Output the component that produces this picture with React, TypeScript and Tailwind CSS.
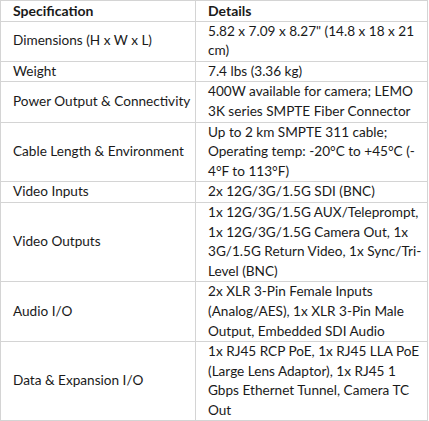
import React from "react";

const rows: [string, string[]][] = [
  ["Dimensions (H x W x L)", ["5.82 x 7.09 x 8.27\" (14.8 x 18 x 21", "cm)"]],
  ["Weight", ["7.4 lbs (3.36 kg)"]],
  ["Power Output & Connectivity", ["400W available for camera; LEMO", "3K series SMPTE Fiber Connector"]],
  ["Cable Length & Environment", ["Up to 2 km SMPTE 311 cable;", "Operating temp: -20°C to +45°C (-", "4°F to 113°F)"]],
  ["Video Inputs", ["2x 12G/3G/1.5G SDI (BNC)"]],
  ["Video Outputs", ["1x 12G/3G/1.5G AUX/Teleprompt,", "1x 12G/3G/1.5G Camera Out, 1x", "3G/1.5G Return Video, 1x Sync/Tri-", "Level (BNC)"]],
  ["Audio I/O", ["2x XLR 3-Pin Female Inputs", "(Analog/AES), 1x XLR 3-Pin Male", "Output, Embedded SDI Audio"]],
  ["Data & Expansion I/O", ["1x RJ45 RCP PoE, 1x RJ45 LLA PoE", "(Large Lens Adaptor), 1x RJ45 1", "Gbps Ethernet Tunnel, Camera TC", "Out"]],
];

export default function App() {
  return (
    <div className="w-[429px] h-[421px] bg-white" style={{ fontFamily: "Lato, 'Liberation Sans', sans-serif" }}>
      <table className="w-[428px] border-collapse table-fixed text-[13.6px] leading-[19.6px] text-[#1a1a1a]">
        <colgroup>
          <col className="w-[195px]" />
          <col />
        </colgroup>
        <thead>
          <tr>
            <th className="border border-[#d4d4d4] px-3 py-0 text-left font-bold text-[14px] whitespace-nowrap">Specification</th>
            <th className="border border-[#d4d4d4] px-3 py-0 text-left font-bold text-[14px] whitespace-nowrap">Details</th>
          </tr>
        </thead>
        <tbody>
          {rows.map(([a, b]) => (
            <tr key={a}>
              <td className="border border-[#d4d4d4] px-3 py-0 align-middle whitespace-nowrap">{a}</td>
              <td className="border border-[#d4d4d4] pl-3 pr-0 py-0 align-middle whitespace-nowrap">
                {b.map((l, i) => (
                  <div key={i}>{l}</div>
                ))}
              </td>
            </tr>
          ))}
        </tbody>
      </table>
    </div>
  );
}
